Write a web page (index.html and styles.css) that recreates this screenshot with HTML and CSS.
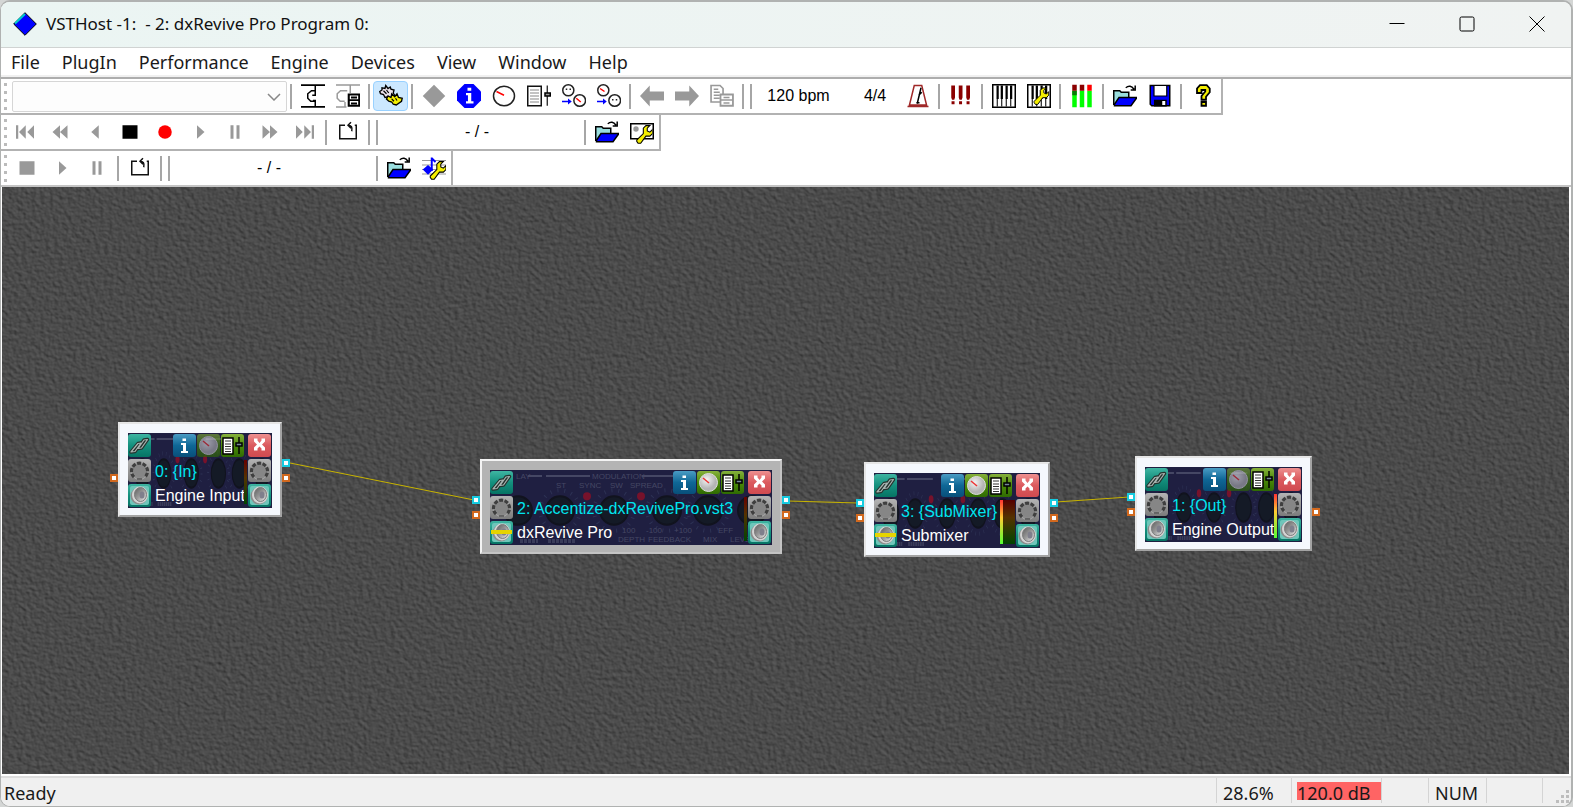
FILE: index.html
```html
<!DOCTYPE html>
<html lang="en">
<head>
<meta charset="utf-8">
<title>VSTHost</title>
<link rel="stylesheet" href="styles.css">
</head>
<body>
<svg class="defs" aria-hidden="true">
  <defs>
    <linearGradient id="g-teal" x1="0" y1="0" x2="0" y2="1"><stop offset="0" stop-color="#3fb5a2"/><stop offset=".5" stop-color="#14907e"/><stop offset="1" stop-color="#067464"/></linearGradient>
    <linearGradient id="g-gray" x1="0" y1="0" x2="0" y2="1"><stop offset="0" stop-color="#b4b4b4"/><stop offset="1" stop-color="#7c7c7c"/></linearGradient>
    <linearGradient id="g-blue" x1="0" y1="0" x2="0" y2="1"><stop offset="0" stop-color="#4a9cc4"/><stop offset=".5" stop-color="#0f6796"/><stop offset="1" stop-color="#084f7a"/></linearGradient>
    <linearGradient id="g-green" x1="0" y1="0" x2="0" y2="1"><stop offset="0" stop-color="#86b03c"/><stop offset=".5" stop-color="#4b8a08"/><stop offset="1" stop-color="#2f6b02"/></linearGradient>
    <linearGradient id="g-red" x1="0" y1="0" x2="0" y2="1"><stop offset="0" stop-color="#ee9090"/><stop offset=".5" stop-color="#db5a5e"/><stop offset="1" stop-color="#d04a50"/></linearGradient>
    <radialGradient id="g-knob" cx=".4" cy=".35"><stop offset="0" stop-color="#f4f4f4"/><stop offset="1" stop-color="#b4b4b4"/></radialGradient>
    <linearGradient id="g-cone" x1="0" y1="0" x2="1" y2="1"><stop offset="0" stop-color="#5c5c5c"/><stop offset=".5" stop-color="#9a9a9a"/><stop offset="1" stop-color="#f0f0f0"/></linearGradient>

    <symbol id="n-link" viewBox="0 0 23 23"><rect width="23" height="23" rx="3" fill="url(#g-teal)"/><g fill="none" stroke-linejoin="round"><path d="M3 18L10 9.500l3-.5-6 8.500zM10 14.500L16 6l3.500-.5-6 8.500z" stroke="#26332f" stroke-width="3.500"/><path d="M3 18L10 9.500l3-.5-6 8.500zM10 14.500L16 6l3.500-.5-6 8.500z" stroke="#a9b5b2" stroke-width="1.200"/></g></symbol>
    <symbol id="n-midi" viewBox="0 0 23 23"><rect width="23" height="23" rx="3" fill="url(#g-gray)"/><circle cx="11.500" cy="12" r="8.500" fill="#8a8a8a" stroke="#a6a6a6"/><path d="M6 18A8 8 0 1 1 17 18" fill="none" stroke="#3f3f3f" stroke-width="3.200" stroke-dasharray="4 1.500"/><circle cx="11.500" cy="12" r="6" fill="#868686"/><path d="M9 20h5" stroke="#555" stroke-width="1.500"/></symbol>
    <symbol id="n-speaker" viewBox="0 0 23 23"><rect width="23" height="23" rx="3" fill="url(#g-teal)"/><rect x="2" y="2" width="19" height="19" rx="2" fill="#6fc6ba"/><ellipse cx="11" cy="12" rx="8.500" ry="8.500" fill="#8c8c8c"/><ellipse cx="12" cy="11" rx="8" ry="8.500" fill="#d4d4d4"/><ellipse cx="12.500" cy="10.500" rx="6" ry="7" fill="url(#g-cone)" stroke="#7b7b7b"/><ellipse cx="14" cy="11" rx="2.500" ry="3.500" fill="#7f7f8c"/></symbol>
    <symbol id="n-info" viewBox="0 0 23 23"><rect width="23" height="23" rx="3" fill="url(#g-blue)"/><path d="M9.500 4.500h3.500v2.500H9.500zM8 9h5v8h2v2H8v-2h2v-6H8z" fill="#fff"/></symbol>
    <symbol id="n-gauge" viewBox="0 0 23 23"><rect width="23" height="23" rx="3" fill="url(#g-green)"/><circle cx="11.500" cy="11.500" r="9" fill="url(#g-knob)" stroke="#ddd"/><path d="M6 7l6 5" stroke="#e33" stroke-width="1.500"/></symbol>
    <symbol id="n-mix" viewBox="0 0 23 23"><rect width="23" height="23" rx="3" fill="url(#g-green)"/><path d="M2 4h10v16H2z" fill="#fff" stroke="#000" stroke-width="1.500"/><path d="M4 7h6M4 10h6M4 12.500h6M4 15h6M4 17.500h6" stroke="#333"/><path d="M18 3v17" stroke="#000" stroke-width="1.500"/><path d="M15 9h6v3h-6z" fill="#789" stroke="#000" stroke-width="1.500"/></symbol>
    <symbol id="n-close" viewBox="0 0 23 23"><rect width="23" height="23" rx="3" fill="url(#g-red)"/><path d="M6 4.500h3.500v2L11.500 9l2-2.500v-2H17v3L14 10.500l3 3v3h-3.500v-2l-2-2-2 2v2H6v-3l3-3-3-3z" fill="#fff"/></symbol>

    <symbol id="plate" viewBox="0 0 282 74" preserveAspectRatio="none">
      <rect width="282" height="74" fill="#1f1f41"/>
      <g fill="#141a26" stroke="#11131e" stroke-width="2"><circle cx="28" cy="40" r="14"/><circle cx="70" cy="40" r="14"/><circle cx="124" cy="40" r="14"/><circle cx="177" cy="40" r="14"/><circle cx="218" cy="40" r="14"/><circle cx="262" cy="40" r="14"/></g>
      <g fill="none" stroke="#2d3254" stroke-width="4" stroke-dasharray="1 6"><circle cx="70" cy="40" r="20"/><circle cx="124" cy="40" r="20"/><circle cx="177" cy="40" r="20"/><circle cx="218" cy="40" r="20"/></g>
      <g fill="#77122b"><circle cx="97" cy="26" r="4"/><circle cx="151" cy="26" r="4"/></g>
      <path d="M38 6h14M56 6h44M152 6h32" stroke="#454764" stroke-width="2"/>
      <path d="M30 70h18M58 70h28" stroke="#3a3c5a" stroke-width="4" stroke-dasharray="3 1"/>
    </symbol>

    <symbol id="i-folder" viewBox="0 0 16 16"><path d="M.5 14V4.500h4l1 1h5V9" fill="#9adede" stroke="#000"/><path d="M1 13.500L4 9h12l-4 5.500H1z" fill="#00f" stroke="#000"/><path d="M8.500 2.500q3-2.500 5.500 1M14.800 1v3H11.800" fill="none" stroke="#000"/></symbol>
    <symbol id="i-wrench" viewBox="0 0 16 16"><path d="M4 14l1 1.500h2L11 10h3l2-2V5l-2 2-2-1V4l2-2h-3L9 4v4l-5 5z" fill="#f4ee00" stroke="#000" stroke-width=".8"/></symbol>
    <symbol id="i-loop" viewBox="0 0 16 16"><path d="M6 3.500H2.500v9h11v-9H12.500M10.500 7.500q.8-4-2.500-4M10 1.500L8 3.500l2 2" fill="none" stroke="#111" stroke-width="1"/></symbol>
    <symbol id="i-play" viewBox="0 0 16 16"><path d="M6 3.500l5 4.500-5 4.500z" fill="#999"/></symbol>
    <symbol id="i-pause" viewBox="0 0 16 16"><path d="M5 3.500h2v9H5zM9 3.500h2v9H9z" fill="#999"/></symbol>
    <symbol id="i-keys" viewBox="0 0 16 16"><path d="M.5 .5h15v15H.5z" fill="#fff" stroke="#000"/><path d="M3.500 10v5M6.500 10v5M9.500 10v5M12.500 10v5" stroke="#000" stroke-width=".7"/><path d="M3 1h1.500v9H3zM5.800 1h1.500v9H5.800zM9 1h1.500v9H9zM12 1h1.500v9H12z"/></symbol>
    <filter id="stone" x="0" y="0" width="100%" height="100%" color-interpolation-filters="sRGB">
      <feTurbulence type="fractalNoise" baseFrequency=".22 .26" numOctaves="2" seed="4"/>
      <feDiffuseLighting lighting-color="#656565" surfaceScale=".7" diffuseConstant="1"><feDistantLight azimuth="315" elevation="48"/></feDiffuseLighting>
    </filter>
  </defs>
</svg>

<div class="window">
  <header class="titlebar">
    <svg class="app-icon" viewBox="0 0 24 24"><path d="M12 .7L23.300 12 12 23.300.7 12z" fill="#00f" stroke="#000"/><path d="M2 11.500L12 2" stroke="#0cc" stroke-width="2"/></svg>
    <h1 class="title">VSTHost -1:&nbsp; - 2: dxRevive Pro Program 0:</h1>
    <button class="caption" aria-label="Minimize"><svg viewBox="0 0 16 16"><path d="M.5 7.500h15"/></svg></button>
    <button class="caption" aria-label="Maximize"><svg viewBox="0 0 16 16"><rect x="1" y="1" width="14" height="14" rx="1.500"/></svg></button>
    <button class="caption" aria-label="Close"><svg viewBox="0 0 16 16"><path d="M.5 .5l15 15M15.500 .5l-15 15"/></svg></button>
  </header>

  <nav class="menu">
    <button>File</button><button>PlugIn</button><button>Performance</button><button>Engine</button><button>Devices</button><button>View</button><button>Window</button><button>Help</button>
  </nav>

  <div class="bars">
    <div class="bar main" role="toolbar" aria-label="Main">
      <i class="grip"></i>
      <label class="combo"><select aria-label="Program"><option></option></select><svg viewBox="0 0 14 8"><path d="M1 1l6 6 6-6"/></svg></label>
      <i class="sep"></i>
      <button class="tool" aria-label="Load plugin"><svg viewBox="0 0 16 16"><path d="M0 .7h16M0 15.300h16" stroke="#000" stroke-width="1.200"/><path d="M9.500 1v6.500H7.500M9.500 15v-4H8M9.500 4.500H7L4.500 6.500v3L6.500 11.500H9.500" fill="none" stroke="#000"/></svg></button>
      <button class="tool" aria-label="Plugin windows"><svg viewBox="0 0 16 16"><path d="M0 .7h16M0 15.300h7M9.500 1v5M7.500 4.500L3 4.500 .8 6.500v3l2 2h3M6 12v3" fill="none" stroke="#999"/><path d="M8.500 7h7v7.500h-7z" fill="#fff" stroke="#000" stroke-width="1.400"/><path d="M8 10.700h8M10 9h4M10 13h4" stroke="#000" stroke-width="1.200"/></svg></button>
      <i class="sep"></i>
      <button class="tool on" aria-label="Engine run" aria-pressed="true"><svg viewBox="0 0 16 16"><path d="M.5 5l1.500-1V2.500l2 .5L4.500 1l1.500 2 1.500-1 .5 1.500 2 .5-.5 2 1 1.500-2 .5-.5 1.500-2-1-2 .5-1-2-2-.5z" fill="#e8e0e8" stroke="#000" stroke-width=".9"/><path d="M3 4.500l2 2M5 4l1.500 2" stroke="#000" stroke-width=".8"/><path d="M5 10l1-2 2 1 .5-2.500 2 2L12 6.500l1 2.500 2.500.5-.5 2-3.500 2.500-2-.5-1-1.500-2-.5z" fill="#f4ee00" stroke="#000" stroke-width=".9"/><path d="M8.500 10l1.500 1.500M11 9.500l1 1.500" stroke="#000" stroke-width=".8"/></svg></button>
      <i class="sep"></i>
      <button class="tool" aria-label="Bypass"><svg viewBox="0 0 16 16"><path d="M8 .5L15.500 8 8 15.500.5 8z" fill="#999"/></svg></button>
      <button class="tool" aria-label="Info"><svg viewBox="0 0 16 16"><path d="M5 0h6l5 5v6l-5 5H5l-5-5V5z" fill="#00f"/><path d="M7 2.500h2.500v2H7zM6 6h3.500v5.500H11V13H6v-1.500h1.300v-4H6z" fill="#fff"/></svg></button>
      <button class="tool" aria-label="Parameters"><svg viewBox="0 0 16 16"><ellipse cx="8" cy="8" rx="7" ry="6.500" fill="#fff" stroke="#222"/><path d="M3 5l5 2.500" stroke="#f00"/></svg></button>
      <button class="tool" aria-label="Edit"><svg viewBox="0 0 16 16"><path d="M.5 1.500h9v13h-9z" fill="#fff" stroke="#111"/><path d="M2 4h6M2 6h6M2 8h6M2 10h6M2 12h6" stroke="#888" stroke-width=".8"/><path d="M13.500 1v13.500" stroke="#111" stroke-width=".8"/><path d="M12 6h3.500v2H12z" fill="#999" stroke="#000"/></svg></button>
      <button class="tool" aria-label="Next program bank"><svg viewBox="0 0 16 16"><circle cx="4.200" cy="4.200" r="3.700" fill="#fff" stroke="#222"/><circle cx="11.800" cy="11" r="3.900" fill="#fff" stroke="#222"/><path d="M2.500 3.500h1M5 3.500h1" stroke="#222"/><path d="M9.500 9.500l3 2.500" stroke="#f00"/><path d="M0 11.700h5" stroke="#00f"/><path d="M4 9.700l2.500 2L4 13.700z" fill="#00f"/></svg></button>
      <button class="tool" aria-label="Copy program"><svg viewBox="0 0 16 16"><circle cx="4.200" cy="4.200" r="3.700" fill="#fff" stroke="#222"/><circle cx="11.800" cy="11" r="3.900" fill="#fff" stroke="#222"/><path d="M2 3l3 2" stroke="#f00"/><path d="M10 10.500h1M12.500 10.500h1" stroke="#222"/><path d="M0 11.700h5" stroke="#00f"/><path d="M4 9.700l2.500 2L4 13.700z" fill="#00f"/></svg></button>
      <i class="sep"></i>
      <button class="tool" aria-label="Previous"><svg viewBox="0 0 16 16"><path d="M0 8l6.500-7v4H16v6H6.500v4z" fill="#999"/></svg></button>
      <button class="tool" aria-label="Next"><svg viewBox="0 0 16 16"><path d="M16 8L9.500 1v4H0v6h9.500v4z" fill="#999"/></svg></button>
      <button class="tool" aria-label="Windows"><svg viewBox="0 0 16 16"><path d="M.7 1h6l2 2v9h-8zM2.500 3.500h3M2.500 5.500h4M2.500 7.500h4M2.500 9.500h4" fill="#fff" stroke="#999" stroke-width="1.100"/><path d="M7 7h8.300v7.500H7z" fill="#fff" stroke="#999" stroke-width="1.200"/><path d="M7 10.700h8M9 9h4M9 12.700h4" stroke="#999"/></svg></button>
      <i class="sep"></i><i class="sep"></i>
      <button class="bpm">120 bpm</button>
      <button class="time">4/4</button>
      <button class="tool" aria-label="Metronome"><svg viewBox="0 0 16 16"><path d="M5.500 1h5l3.200 13H2.300zM1 15h14" fill="#fff" stroke="#a02828"/><path d="M10 2.500L7.500 13M8.500 7.500l2-2" stroke="#000"/><path d="M7 12.500h2" stroke="#000"/></svg></button>
      <i class="sep"></i>
      <button class="tool" aria-label="Panic"><svg viewBox="0 0 16 16"><path d="M1.500 1h2.500v8l-.5 1.500h-1.500L1.500 9zM6.500 1H9v8l-.5 1.500H7L6.500 9zM11.500 1H14v8l-.5 1.500H12l-.5-1.500zM1.700 11.500h2v2h-2zM6.700 11.500h2v2h-2zM11.700 11.500h2v2h-2z" fill="#8b0000"/></svg></button>
      <i class="sep"></i>
      <button class="tool" aria-label="Keyboard"><svg><use href="#i-keys"/></svg></button>
      <button class="tool" aria-label="Keyboard settings"><svg viewBox="0 0 16 16"><use href="#i-keys"/><use href="#i-wrench" x="1" y="1" width="14" height="13"/></svg></button>
      <i class="sep"></i>
      <button class="tool" aria-label="Levels"><svg viewBox="0 0 16 16"><path d="M1.500 4.500h3V15.500h-3zM6.500 4.500h3V15.500h-3zM11.500 4.500h3V15.500h-3z" fill="#0f0"/><path d="M1.500 4.500h3V7.500h-3z" fill="#087808"/><path d="M1.500 .5h3v4h-3zM6.500 .5h3v4h-3z" fill="#8b0000"/><path d="M11.500 .5h3v4h-3z" fill="#f00"/></svg></button>
      <i class="sep"></i>
      <button class="tool" aria-label="Open"><svg><use href="#i-folder"/></svg></button>
      <button class="tool" aria-label="Save"><svg viewBox="0 0 16 16"><path d="M1.500 1h13v13.500H2.500l-1-1z" fill="#00f" stroke="#000"/><path d="M4 1h8.500v7H4z" fill="#fff" stroke="#000" stroke-width=".8"/><path d="M4 10.500h8.500v4.500H4z"/><path d="M9.500 11.300h2V14h-2z" fill="#fff"/></svg></button>
      <i class="sep"></i>
      <button class="tool" aria-label="Help"><svg viewBox="0 0 16 16"><path d="M4 6V3l2-2.200h4.500l2 2.200v2.500L10 8.500V10.500H7V8l2.500-3V4H7v2zM7 12h3v2.500H7z" fill="#f4ee00" stroke="#000" stroke-width="1.200"/></svg></button>
    </div>

    <div class="bar wave" role="toolbar" aria-label="Wave recorder">
      <i class="grip"></i>
      <button class="tool" aria-label="Start"><svg viewBox="0 0 16 16"><path d="M2 3.500h1.500v9H2zM8.500 3.500v9L4 8zM14 3.500v9L9.500 8z" fill="#999"/></svg></button>
      <button class="tool" aria-label="Rewind"><svg viewBox="0 0 16 16"><path d="M8 3.500v9L3 8zM13 3.500v9L8 8z" fill="#999"/></svg></button>
      <button class="tool" aria-label="Back"><svg viewBox="0 0 16 16"><path d="M10.500 3.500v9l-5-4.500z" fill="#999"/></svg></button>
      <button class="tool" aria-label="Stop"><svg viewBox="0 0 16 16"><path d="M3 3.500h10v9H3z"/></svg></button>
      <button class="tool" aria-label="Record"><svg viewBox="0 0 16 16"><circle cx="8" cy="8" r="4.500" fill="#f00"/></svg></button>
      <button class="tool" aria-label="Play"><svg><use href="#i-play"/></svg></button>
      <button class="tool" aria-label="Pause"><svg><use href="#i-pause"/></svg></button>
      <button class="tool" aria-label="Forward"><svg viewBox="0 0 16 16"><path d="M3 3.500v9L8 8zM8 3.500v9L13 8z" fill="#999"/></svg></button>
      <button class="tool" aria-label="End"><svg viewBox="0 0 16 16"><path d="M12.500 3.500H14v9h-1.500zM2 3.500v9L6.500 8zM7.500 3.500v9L12 8z" fill="#999"/></svg></button>
      <i class="sep"></i>
      <button class="tool" aria-label="Loop"><svg><use href="#i-loop"/></svg></button>
      <i class="sep"></i><i class="sep"></i>
      <span class="pos">- / -</span>
      <i class="sep"></i>
      <button class="tool" aria-label="Open wave"><svg><use href="#i-folder"/></svg></button>
      <button class="tool" aria-label="Wave settings"><svg viewBox="0 0 16 16"><path d="M.5 2.500h15v10H.5z" fill="#fff" stroke="#000"/><circle cx="4" cy="6" r="1.800" fill="#999"/><use href="#i-wrench" x="1" y="2" width="14" height="14"/></svg></button>
    </div>

    <div class="bar" role="toolbar" aria-label="MIDI player">
      <i class="grip"></i>
      <button class="tool" aria-label="Stop MIDI"><svg viewBox="0 0 16 16"><path d="M3 3.500h10v9H3z" fill="#999"/></svg></button>
      <button class="tool" aria-label="Play MIDI"><svg><use href="#i-play"/></svg></button>
      <button class="tool" aria-label="Pause MIDI"><svg><use href="#i-pause"/></svg></button>
      <i class="sep"></i>
      <button class="tool" aria-label="Loop MIDI"><svg><use href="#i-loop"/></svg></button>
      <i class="sep"></i><i class="sep"></i>
      <span class="pos">- / -</span>
      <i class="sep"></i>
      <button class="tool" aria-label="Open MIDI"><svg><use href="#i-folder"/></svg></button>
      <button class="tool" aria-label="MIDI settings"><svg viewBox="0 0 16 16"><path d="M0 3h16M0 6h16M0 9h16M0 12h16" stroke="#999" stroke-width=".7"/><path d="M6.500 1v9M6.500 1.500L9 4" stroke="#00f" stroke-width="1.300"/><path d="M.5 9l3.500-3 3.500 3L4 12.500z" fill="#00f"/><use href="#i-wrench" x="2" y="2" width="14" height="14"/></svg></button>
    </div>
  </div>

  <main class="canvas">
    <svg class="layer"><rect width="100%" height="100%" filter="url(#stone)"/></svg>
    <svg class="layer wires"><path d="M288 276L472 313M786 314L856 316M1054 315L1127 310"/></svg>

    <section class="node n0">
      <div class="face">
        <svg class="plate"><use href="#plate"/></svg>
        <div class="col"><button aria-label="Link"><svg><use href="#n-link"/></svg></button><button aria-label="MIDI in"><svg><use href="#n-midi"/></svg></button><button aria-label="Audio in"><svg><use href="#n-speaker"/></svg></button></div>
        <div class="body">
          <div class="tools"><button aria-label="Info"><svg><use href="#n-info"/></svg></button><button class="dim" aria-label="Parameters"><svg><use href="#n-gauge"/></svg></button><button aria-label="Edit"><svg><use href="#n-mix"/></svg></button></div>
          <p class="file">0: {In}</p><p class="name">Engine Input</p>
        </div>
        <i class="meter off"></i>
        <div class="col"><button aria-label="Close"><svg><use href="#n-close"/></svg></button><button aria-label="MIDI out"><svg><use href="#n-midi"/></svg></button><button aria-label="Audio out"><svg><use href="#n-speaker"/></svg></button></div>
      </div>
      <i class="port midi left"></i><i class="port audio right"></i><i class="port midi right"></i>
    </section>

    <section class="node n2 active">
      <div class="face">
        <svg class="plate"><use href="#plate"/></svg>
        <svg class="plate legend"><text x="26" y="9">LAY</text><text x="102" y="9">MODULATION</text><text x="66" y="18">ST</text><text x="89" y="18">SYNC</text><text x="120" y="18">SW</text><text x="140" y="18">SPREAD</text><text x="128" y="72">DEPTH</text><text x="158" y="72">FEEDBACK</text><text x="213" y="72">MIX</text><text x="240" y="72">LEVEL</text><text x="132" y="63">100</text><text x="156" y="63">-100</text><text x="184" y="63">+100</text><text x="228" y="63">EFF</text></svg>
        <div class="col"><button aria-label="Link"><svg><use href="#n-link"/></svg></button><button aria-label="MIDI in"><svg><use href="#n-midi"/></svg></button><button class="fed" aria-label="Audio in"><svg><use href="#n-speaker"/></svg></button></div>
        <div class="body">
          <div class="tools"><button aria-label="Info"><svg><use href="#n-info"/></svg></button><button aria-label="Parameters"><svg><use href="#n-gauge"/></svg></button><button aria-label="Edit"><svg><use href="#n-mix"/></svg></button></div>
          <p class="file">2: Accentize-dxRevivePro.vst3</p><p class="name">dxRevive Pro</p>
        </div>
        <i class="meter off"></i>
        <div class="col"><button aria-label="Close"><svg><use href="#n-close"/></svg></button><button aria-label="MIDI out"><svg><use href="#n-midi"/></svg></button><button aria-label="Audio out"><svg><use href="#n-speaker"/></svg></button></div>
      </div>
      <i class="port audio left"></i><i class="port midi left"></i><i class="port audio right"></i><i class="port midi right"></i>
    </section>

    <section class="node n3">
      <div class="face">
        <svg class="plate"><use href="#plate"/></svg>
        <div class="col"><button aria-label="Link"><svg><use href="#n-link"/></svg></button><button aria-label="MIDI in"><svg><use href="#n-midi"/></svg></button><button class="fed" aria-label="Audio in"><svg><use href="#n-speaker"/></svg></button></div>
        <div class="body">
          <div class="tools"><button aria-label="Info"><svg><use href="#n-info"/></svg></button><button aria-label="Parameters"><svg><use href="#n-gauge"/></svg></button><button aria-label="Edit"><svg><use href="#n-mix"/></svg></button></div>
          <p class="file">3: {SubMixer}</p><p class="name">Submixer</p>
        </div>
        <i class="meter wide"></i>
        <div class="col"><button aria-label="Close"><svg><use href="#n-close"/></svg></button><button aria-label="MIDI out"><svg><use href="#n-midi"/></svg></button><button aria-label="Audio out"><svg><use href="#n-speaker"/></svg></button></div>
      </div>
      <i class="port audio left"></i><i class="port midi left"></i><i class="port audio right"></i><i class="port midi right"></i>
    </section>

    <section class="node n1">
      <div class="face">
        <svg class="plate"><use href="#plate"/></svg>
        <div class="col"><button aria-label="Link"><svg><use href="#n-link"/></svg></button><button aria-label="MIDI in"><svg><use href="#n-midi"/></svg></button><button aria-label="Audio in"><svg><use href="#n-speaker"/></svg></button></div>
        <div class="body">
          <div class="tools"><button aria-label="Info"><svg><use href="#n-info"/></svg></button><button class="dim" aria-label="Parameters"><svg><use href="#n-gauge"/></svg></button><button aria-label="Edit"><svg><use href="#n-mix"/></svg></button></div>
          <p class="file">1: {Out}</p><p class="name">Engine Output</p>
        </div>
        <i class="meter"></i>
        <div class="col"><button aria-label="Close"><svg><use href="#n-close"/></svg></button><button aria-label="MIDI out"><svg><use href="#n-midi"/></svg></button><button aria-label="Audio out"><svg><use href="#n-speaker"/></svg></button></div>
      </div>
      <i class="port audio left"></i><i class="port midi left"></i><i class="port midi right"></i>
    </section>
  </main>

  <footer class="status">
    <span class="msg">Ready</span>
    <span class="cell load">28.6%</span>
    <span class="cell level"><b>120.0 dB</b></span>
    <span class="cell caps"></span>
    <span class="cell num">NUM</span>
    <span class="cell scrl"></span>
    <span class="cell end"><svg viewBox="0 0 13 13"><path d="M10 0h3v3h-3zM5 5h3v3H5zM10 5h3v3h-3zM0 10h3v3H0zM5 10h3v3H5zM10 10h3v3h-3z" fill="#bdbdbd"/></svg></span>
  </footer>
</div>
</body>
</html>
```
FILE: styles.css
```css
* { box-sizing: border-box; }
body { margin: 0; background: #d4d6d5; font-family: "Noto Sans", "Open Sans", sans-serif; color: #1a1a1a; }
button { margin: 0; padding: 0; border: 0; background: none; font: inherit; color: inherit; }
.defs { position: absolute; width: 0; height: 0; }

.window { display: flex; flex-direction: column; height: 100vh; overflow: hidden; background: #fff; border: 2px solid #b0b2b1; border-left-width: 1px; border-bottom-width: 1px; border-radius: 10px; }

.titlebar { display: flex; align-items: center; height: 46px; flex: none; padding: 0 0 2px 12px; background: linear-gradient(90deg, #ebf5f3, #f0f3f2); border-bottom: 1px solid #d0d3d2; }
.app-icon { width: 24px; height: 24px; }
.title { flex: 1; margin: 0 0 0 9px; font-size: 17px; line-height: 24px; font-weight: 400; color: #111; white-space: nowrap; }
.caption { width: 70px; height: 43px; }
.caption:last-child { margin-right: -1px; }
.caption svg { display: block; width: 16px; height: 16px; margin: auto; fill: none; stroke: #000; stroke-width: 1; }

.menu { display: flex; gap: 22px; flex: none; height: 29px; padding: 0 10px; border-bottom: 2px solid #f0f0f0; font-size: 18px; line-height: 26px; }

.bars { flex: none; display: flex; flex-direction: column; align-items: flex-start; border-top: 2px solid #adadad; border-bottom: 2px solid #c4c4c4; }
.bar { display: flex; align-items: center; height: 36px; border-bottom: 2px solid #b2b2b2; border-right: 2px solid #b2b2b2; }
.bar:last-child { height: 34px; border-bottom: 0; }
.bar.main { padding-right: 1px; }
.grip { width: 3px; height: 27px; margin: 0 2px 0 3px; background: repeating-linear-gradient(#bbb 0 3px, #fff 3px 8px); }
.sep { width: 2px; height: 25px; margin: 0 3px; background: #a6a6a6; }
.tool { display: flex; align-items: center; justify-content: center; width: 35px; height: 30px; }
.tool svg { width: 24px; height: 24px; }
.tool.on { background: #cce8ff; border: 1px solid #99d1ff; border-radius: 4px; }
.combo { position: relative; width: 275px; height: 31px; margin-left: 3px; }
.combo select { width: 100%; height: 100%; appearance: none; border: 1px solid #d6d6d6; border-radius: 2px; background: #fdfdfd; }
.combo svg { position: absolute; right: 6px; top: 12px; width: 14px; height: 8px; fill: none; stroke: #888; stroke-width: 1.5; pointer-events: none; }
.bpm, .time { font-family: "Liberation Sans", sans-serif; font-size: 16px; line-height: 20px; color: #000; }
.bpm { width: 87px; }
.time { width: 58px; padding-left: 8px; }
.pos { width: 200px; padding-right: 8px; text-align: center; font-family: "Liberation Sans", sans-serif; font-size: 16px; color: #000; }
.wave .grip { margin-right: 0; }

.canvas { position: relative; flex: 1; min-height: 0; overflow: hidden; margin: 0 2px 0 1px; background: #4a4a4a; }
.layer { position: absolute; inset: 0; width: 100%; height: 100%; }
.wires { fill: none; stroke: #c8b400; stroke-width: 1; }

.node { position: absolute; padding: 9px 8px 7px; background: #f5f8fd; border: 2px solid; border-color: #e6e6e6 #a4a4a4 #a4a4a4 #e6e6e6; }
.node.active { background: #b4b4b4; border-color: #f4f4f4 #c4c4c4 #c4c4c4 #f4f4f4; }
.n0 { left: 116px; top: 235px; width: 164px; }
.n2 { left: 478px; top: 272px; width: 302px; }
.n3 { left: 862px; top: 275px; width: 186px; }
.n1 { left: 1133px; top: 269px; width: 177px; }

.face { position: relative; display: flex; height: 75px; background: #1f1f41; }
.plate { position: absolute; left: 0; top: 0; width: 100%; height: 100%; }
.legend { font: 8px "Liberation Sans", sans-serif; fill: #454764; }
.col { position: relative; flex: none; display: grid; grid-template-rows: repeat(3, 23px); gap: 2px; padding: 1px 0; width: 24px; }
.col button, .tools button { display: block; width: 23px; height: 23px; position: relative; }
.col svg, .tools svg { display: block; width: 23px; height: 23px; }
.fed::after { content: ""; position: absolute; left: 1px; right: 1px; top: 9px; height: 4px; background: #e6d400; }
.body { position: relative; flex: 1; min-width: 0; }
.tools { display: flex; justify-content: flex-end; gap: 1px; padding: 1px 0 0; height: 24px; }
.dim { opacity: .6; }
.file, .name { margin: 0 -6px 0 3px; font: 16px/24px "Liberation Sans", sans-serif; white-space: nowrap; }
.file { margin-top: 3px; color: #00e5f0; }
.name { color: #fff; }
.meter { position: relative; align-self: flex-end; flex: none; width: 3px; height: 44px; margin: 0 1px 4px 0; background: linear-gradient(#f33, #fc3 40%, #5f3); }
.meter.off { background: linear-gradient(#600, #530 40%, #040); }
.meter.wide { width: 15px; margin-left: -12px; background: linear-gradient(#f33, #fc3 40%, #5f3) left / 3px 100% no-repeat, linear-gradient(#500, #530 40%, #040); }

.port { position: absolute; width: 8px; height: 8px; background: #fff; border: 2px solid; }
.port.audio { top: 35px; border-color: #16cbe0; }
.port.midi { top: 50px; border-color: #d2691e; }
.port.left { left: -10px; }
.port.right { right: -10px; }

.status { display: flex; align-items: stretch; flex: none; height: 32px; padding-top: 4px; background: linear-gradient(#fff 0 2px, #ddd 2px 4px, #f0f0f0 4px); font-size: 18px; line-height: 30px; }
.msg { flex: 1; padding-left: 3px; }
.cell { flex: none; border-left: 1px solid #d4d4d4; margin-bottom: 3px; padding-left: 6px; }
.load { width: 75px; }
.level { width: 90px; padding-left: 5px; display: flex; align-items: center; }
.level b { flex: 1; height: 18px; font-weight: 400; line-height: 22px; background: #ff6464; }
.caps { width: 47px; }
.num { width: 58px; }
.scrl { width: 56px; }
.end { width: 29px; display: flex; align-items: flex-end; justify-content: flex-end; padding: 0 2px 0 0; }
.end svg { width: 13px; height: 13px; }
```
